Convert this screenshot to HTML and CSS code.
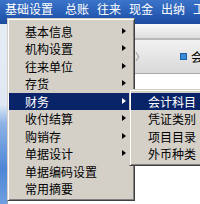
FILE: index.html
```html
<!DOCTYPE html>
<html>
<head>
<meta charset="utf-8">
<link rel="stylesheet" href="styles.css">
</head>
<body>
<div class="screen">
  <div class="menubar">
    <span class="mb-item first">基础设置</span>
    <span class="mb-item">总账</span>
    <span class="mb-item">往来</span>
    <span class="mb-item">现金</span>
    <span class="mb-item">出纳</span>
    <span class="mb-item">工</span>
  </div>
  <div class="workspace">
    <div class="leftpane"></div>
    <div class="window">
      <div class="win-band"></div>
      <div class="win-toolbar">
        <span class="chev">〉</span>
        <span class="tb-icon"></span>
        <span class="tb-text">会</span>
      </div>
      <div class="win-body"></div>
    </div>
  </div>

  <div class="menu main">
    <div class="item">基本信息<i class="arrow"></i></div>
    <div class="item">机构设置<i class="arrow"></i></div>
    <div class="item">往来单位<i class="arrow"></i></div>
    <div class="item">存货<i class="arrow"></i></div>
    <div class="item active">财务<i class="arrow"></i></div>
    <div class="item">收付结算<i class="arrow"></i></div>
    <div class="item">购销存<i class="arrow"></i></div>
    <div class="item">单据设计<i class="arrow"></i></div>
    <div class="item">单据编码设置</div>
    <div class="item">常用摘要</div>
  </div>

  <div class="menu sub">
    <div class="item active">会计科目</div>
    <div class="item">凭证类别</div>
    <div class="item">项目目录</div>
    <div class="item">外币种类</div>
  </div>
</div>
</body>
</html>
```

FILE: styles.css
```css
html, body {
  margin: 0;
  padding: 0;
}
body {
  width: 200px;
  height: 204px;
  overflow: hidden;
  font-family: "Noto Sans CJK SC", "Noto Sans", sans-serif;
  font-size: 12px;
}
.screen {
  position: relative;
  width: 200px;
  height: 204px;
  overflow: hidden;
  display: flex;
  flex-direction: column;
  background: #ffffff;
}
.menubar {
  height: 24px;
  flex: none;
  display: flex;
  align-items: flex-start;
  padding-left: 5px;
  background: linear-gradient(#3b74c9, #2458b0 70%, #1d4c9c);
  color: #ffffff;
  line-height: 18px;
  white-space: nowrap;
}
.mb-item {
  margin-right: 8px;
}
.mb-item.first {
  margin-right: 12px;
}
.workspace {
  flex: 1;
  display: flex;
}
.leftpane {
  width: 7px;
  flex: none;
  background: linear-gradient(#e6ecf4, #dfe8f4 45%, #8fb4e6 55%, #4d86d6 80%, #6e9fe0);
}
.window {
  flex: 1;
  display: flex;
  flex-direction: column;
  border-left: 1px solid #9aa4b4;
}
.win-band {
  height: 14px;
  flex: none;
  background: linear-gradient(#fafafa, #dedede);
  border-bottom: 2px solid #b8b8b8;
}
.win-toolbar {
  height: 33px;
  flex: none;
  display: flex;
  align-items: center;
  padding-left: 127px;
  background: linear-gradient(#f2f2f2, #d8d8d8);
  border-bottom: 1px solid #a8a8a8;
  color: #000;
}
.chev {
  width: 8px;
  color: #888;
  font-size: 10px;
}
.tb-icon {
  width: 5px;
  height: 5px;
  margin-left: 37px;
  background: #3a8ad8;
  border: 1px solid #1c5fa8;
}
.tb-text {
  margin-left: 4px;
}
.win-body {
  flex: 1;
  background: #ffffff;
}
.menu {
  position: absolute;
  background: #d4d0c8;
  border: 1px solid;
  border-color: #d4d0c8 #404040 #404040 #d4d0c8;
  box-shadow: inset 1px 1px #ffffff, inset -1px -1px #808080;
  color: #000000;
}
.menu.main {
  left: 7px;
  top: 18px;
  width: 124px;
  padding: 3.5px 1px 2px 1px;
}
.menu.sub {
  left: 129px;
  top: 89px;
  width: 76px;
  padding: 2.5px 1px 2px 1px;
}
.item {
  position: relative;
  height: 17.5px;
  line-height: 17px;
  padding-left: 16px;
  white-space: nowrap;
}
.sub .item {
  padding-left: 17px;
}
.item.active {
  background: #0a246a;
  color: #ffffff;
}
.arrow {
  position: absolute;
  left: 113px;
  top: 5px;
  width: 0;
  height: 0;
  border-left: 4px solid #000000;
  border-top: 3.5px solid transparent;
  border-bottom: 3.5px solid transparent;
}
.item.active .arrow {
  border-left-color: #ffffff;
}
```
